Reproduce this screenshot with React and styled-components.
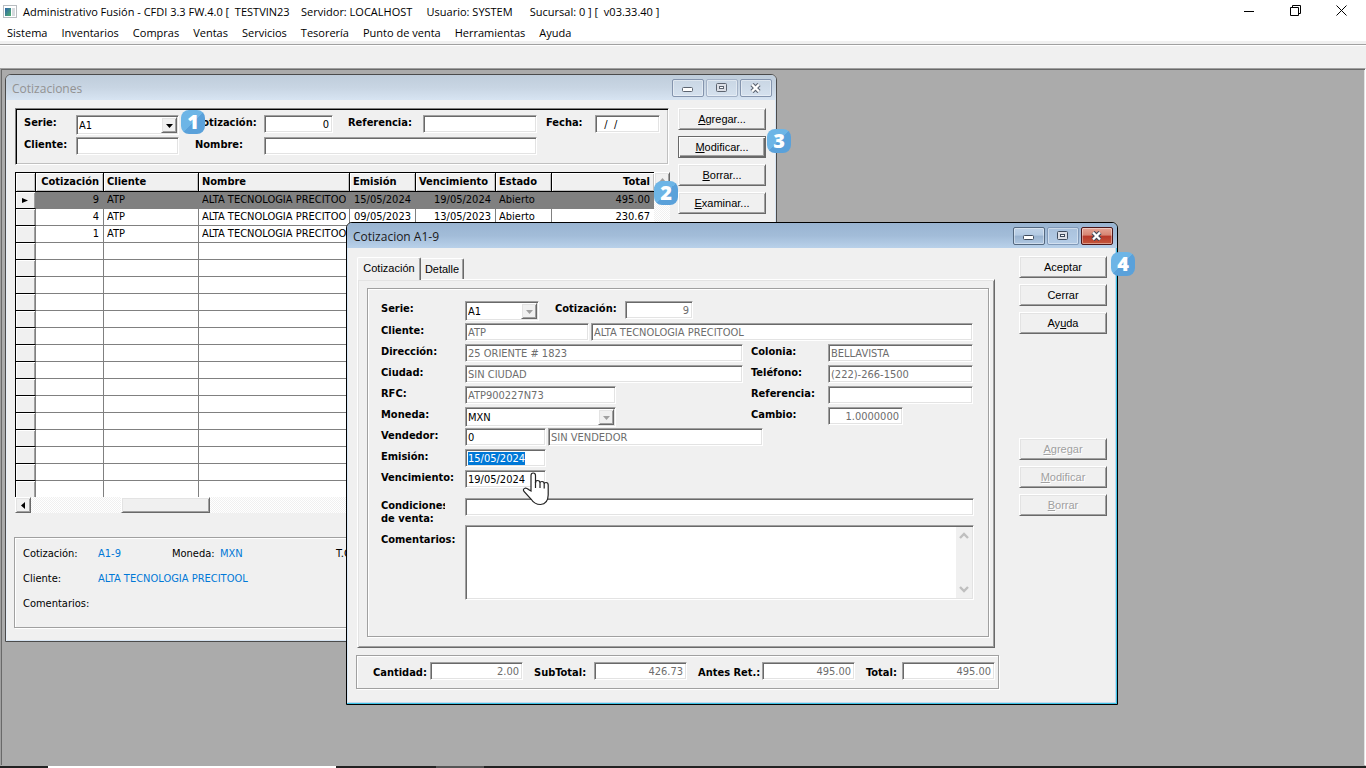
import React, { useEffect, useRef } from "react";
import styled, { createGlobalStyle, css } from "styled-components";

const uiFont = `"DejaVu Sans Condensed", "Noto Sans", sans-serif`;
const titleFont = `"Open Sans", "Noto Sans", sans-serif`;
const buttonFont = `"Liberation Sans", Arial, sans-serif`;

const raised = css`
  border: 1px solid;
  border-color: #fff #696969 #696969 #fff;
  box-shadow: inset 1px 1px 0 #e3e3e3, inset -1px -1px 0 #a0a0a0;
`;
const sunken = css`
  border: 1px solid;
  border-color: #a0a0a0 #fff #fff #a0a0a0;
  box-shadow: inset 1px 1px 0 #696969, inset -1px -1px 0 #e3e3e3;
`;
const etched = css`
  border: 1px solid #a0a0a0;
  box-shadow: inset 1px 1px 0 #fff, 1px 1px 0 #fff;
`;

const GlobalStyle = createGlobalStyle`
  * { box-sizing: border-box; }
  body {
    margin: 0;
    background: #ababab;
    font-family: ${uiFont};
    font-size: 11px;
    color: #000;
    overflow: hidden;
  }
  input, select, textarea, button { font: inherit; color: inherit; }
  ::selection { background: #0078d7; color: #fff; }
`;

const Page = styled.div`
  display: flex;
  flex-direction: column;
  height: 100vh;
`;
const AppTitle = styled.header`
  display: flex;
  align-items: center;
  height: 23px;
  padding: 0 2px;
  background: #fff;
  font-family: ${titleFont};
  h1 {
    flex: 1;
    margin: 0 0 0 5px;
    font-size: 11px;
    font-weight: 400;
    white-space: pre;
  }
`;
const SysButton = styled.button`
  display: flex;
  justify-content: center;
  align-items: center;
  width: 46px;
  height: 22px;
  padding: 0 0 2px;
  border: 0;
  background: none;
`;
const MenuBar = styled.nav`
  display: flex;
  gap: 14px;
  height: 18px;
  padding: 0 7px;
  background: #fff;
  font-family: ${titleFont};
  font-size: 11px;
  line-height: 20px;
  a {
    color: #000;
    text-decoration: none;
  }
`;
const Toolbar = styled.div`
  height: 27px;
  background: #f0f0f0;
  &::before {
    content: "";
    display: block;
    height: 4px;
    border-bottom: 1px solid #fff;
    box-shadow: inset 0 -1px 0 #a0a0a0;
  }
`;
const Desktop = styled.main`
  position: relative;
  flex: 1;
  background: #ababab;
  border: 1px solid;
  border-color: #a0a0a0 #fff #ababab #a0a0a0;
  box-shadow: inset 1px 1px 0 #696969, inset -1px 0 0 #e3e3e3;
`;
const Taskbar = styled.footer`
  display: flex;
  height: 2px;
  padding-left: 48px;
  background: #222;
`;
const TaskItem = styled.div`
  width: ${(p) => p.$w}px;
  margin-right: 100px;
  background: ${(p) => p.$bg};
`;

const Win = styled.section`
  position: absolute;
  left: ${(p) => p.$x}px;
  top: ${(p) => p.$y}px;
  width: 772px;
  display: flex;
  flex-direction: column;
  background: #f0f0f0;
  border: 1px solid ${(p) => (p.$active ? "#000" : "#4b4b4b")};
  border-radius: 6px 6px 0 0;
  box-shadow: ${(p) =>
    p.$active
      ? "inset -1px -1px 0 #3cc3e6, inset 1px 0 0 #d9e8f7, inset -2px -2px 0 #c5d8ec"
      : "inset 1px 0 0 #e8eff8, inset -1px -1px 0 #d7e4f2"};
`;
const WinTitle = styled.div`
  display: flex;
  gap: 2px;
  height: 25px;
  padding: 4px 4px 0 6px;
  border-radius: 5px 5px 0 0;
  font-family: ${titleFont};
  background: ${(p) =>
    p.$active
      ? "linear-gradient(#99b4d1, #a2bcd8 50%, #b9d1ea)"
      : "linear-gradient(#bfcddb, #c8d5e3 50%, #d7e4f2)"};
  color: ${(p) => (p.$active ? "#1a1a1a" : "#929292")};
  h2 {
    flex: 1;
    margin: 0;
    font-size: 12px;
    font-weight: 400;
    line-height: 20px;
  }
`;
const WinButton = styled.button`
  display: flex;
  justify-content: center;
  align-items: center;
  width: 32px;
  height: 18px;
  padding: 0 0 1px;
  border: 1px solid ${(p) => (p.$close ? "#4c1518" : p.$active ? "#54687f" : "#8494ad")};
  border-radius: 2px;
  box-shadow: inset 0 0 0 1px rgba(255, 255, 255, 0.4);
  background: ${(p) =>
    p.$close
      ? "linear-gradient(#e5a596, #d68472 45%, #b8382a 50%, #c4573c)"
      : p.$active
        ? "linear-gradient(#c0d3e8, #b3cae3 45%, #98b2cf 50%, #b0c8e2)"
        : "linear-gradient(#c9d6e4, #d5e1ee)"};
  ${(p) =>
    p.$dim &&
    css`
      border-color: ${p.$active ? "#8199b8" : "#a3b1c6"};
      background: ${p.$active ? "linear-gradient(#a9c1dc, #b4cce6)" : "linear-gradient(#c9d6e4, #d5e1ee)"};
    `}
`;
const Body = styled.div`
  display: flex;
  align-items: flex-start;
  gap: ${(p) => p.$gap}px;
  padding: 8px 10px ${(p) => p.$bottom}px 9px;
`;
const Main = styled.div`
  flex: 1;
  min-width: 0;
`;
const ButtonColumn = styled.div`
  display: flex;
  flex-direction: column;
  gap: 6px;
  width: 88px;
`;
const PushButton = styled.button`
  ${raised}
  height: 22px;
  padding: 0;
  background: #f0f0f0;
  font-family: ${buttonFont};
  font-size: 11px;
  line-height: 20px;
  ${(p) =>
    p.$focused &&
    css`
      border-color: #696969;
      box-shadow: inset 1px 1px 0 #fff, inset -1px -1px 0 #696969, inset -2px -2px 0 #a0a0a0;
    `}
  &:disabled {
    color: #a0a0a0;
    text-shadow: 1px 1px 0 #fff;
  }
`;
const Spacer = styled.div`
  height: ${(p) => p.$h}px;
`;

const Label = styled.label`
  padding-top: 1px;
  font-weight: 700;
  line-height: 13px;
  white-space: nowrap;
`;
const Field = styled.input`
  ${sunken}
  width: ${(p) => (p.$w ? `${p.$w}px` : "100%")};
  height: 18px;
  min-width: 0;
  padding: 0 ${(p) => (p.$right ? 3 : 2)}px;
  border-radius: 0;
  outline: 0;
  background: #fff;
  text-align: ${(p) => (p.$right ? "right" : "left")};
  &:read-only {
    color: #6d6d6d;
  }
`;
const Combo = styled.div`
  ${sunken}
  display: flex;
  width: ${(p) => p.$w}px;
  height: 20px;
  padding: 1px;
  background: #fff;
  select {
    flex: 1;
    min-width: 0;
    padding: 0 1px;
    border: 0;
    outline: 0;
    appearance: none;
    background: none;
    opacity: 1;
    color: #000;
  }
`;
const ComboArrow = styled.span`
  ${raised}
  display: flex;
  justify-content: center;
  align-items: center;
  width: 16px;
  background: #f0f0f0;
`;

const FilterPanel = styled.form`
  display: grid;
  grid-template-columns: 52px 119px 69px 84px 75px 123px 49px 65px;
  grid-auto-rows: 22px;
  align-items: start;
  height: 57px;
  padding: 6px 8px;
  border: 1px solid;
  border-color: #808080 #fff #fff #808080;
  box-shadow: inset 1px 1px 0 #000, inset -1px -1px 0 #c0c0c0;
`;
const Wide = styled.div`
  display: flex;
  gap: ${(p) => p.$gap || 0}px;
  grid-column: span ${(p) => p.$span};
  padding-right: ${(p) => p.$pad || 0}px;
`;

const GridView = styled.div`
  display: grid;
  grid-template-columns: 1fr 16px;
  margin-top: 7px;
`;
const Table = styled.table`
  width: 100%;
  table-layout: fixed;
  border-spacing: 0;
  border-left: 1px solid #000;
  background: #fff;
  th {
    height: 20px;
    padding: 0 3px 1px;
    border: solid #000;
    border-width: 1px 1px 1px 0;
    box-shadow: inset 1px 1px 0 #fff, inset -1px -1px 0 #c0c0c0;
    background: #f0f0f0;
    font-weight: 700;
    line-height: 13px;
    text-align: left;
    white-space: nowrap;
  }
  td {
    height: 17px;
    padding: 0 3px 2px;
    border: solid #808080;
    border-width: 0 1px 1px 0;
    line-height: 13px;
  }
  th:last-child,
  td:last-child {
    border-right: 0;
  }
  th.num,
  td.num {
    padding-right: 4px;
    text-align: right;
  }
  td.head {
    padding: 0;
    background: #f0f0f0;
    border-color: #808080 #808080 #000;
    box-shadow: inset 1px 1px 0 #fff, inset -1px 0 0 #a0a0a0;
    text-align: center;
  }
  tr:last-child td {
    height: 16px;
    border-bottom: 0;
  }
  tr.selected td {
    background: #808080;
    border-right-color: #808080;
  }
  tr.selected td.head {
    background: #f0f0f0;
  }
  svg {
    display: block;
    margin: 0 auto;
  }
`;
const Clip = styled.div`
  overflow: hidden;
  height: 13px;
  white-space: nowrap;
`;
const ScrollTrack = styled.div`
  display: flex;
  flex-direction: ${(p) => (p.$vertical ? "column" : "row")};
  justify-content: space-between;
  background: repeating-conic-gradient(#fff 0 25%, #f0f0f0 0 50%) 0 0 / 2px 2px;
`;
const ScrollButton = styled.button`
  ${raised}
  display: flex;
  justify-content: center;
  align-items: center;
  width: 16px;
  height: 16px;
  padding: 0;
  background: #f0f0f0;
`;
const ScrollThumb = styled.div`
  ${raised}
  width: 89px;
  height: 16px;
  margin: 0 auto 0 90px;
  background: #f0f0f0;
`;

const Summary = styled.div`
  ${etched}
  display: grid;
  grid-template-columns: 75px 74px 48px 116px 1fr;
  grid-auto-rows: 25px;
  height: 91px;
  margin: 24px 0 0 -1px;
  padding: 3px 8px;
  line-height: 25px;
  white-space: nowrap;
`;
const Value = styled.span`
  grid-column: span ${(p) => p.$span || 1};
  color: #0078d7;
`;

const Tabs = styled.div`
  display: flex;
  align-items: flex-end;
  height: 23px;
  margin: 1px 0 -1px 1px;
`;
const Tab = styled.button`
  position: relative;
  z-index: ${(p) => (p.$active ? 1 : 0)};
  height: ${(p) => (p.$active ? 23 : 21)}px;
  margin-bottom: ${(p) => (p.$active ? 0 : 1)}px;
  width: ${(p) => (p.$active ? 64 : 43)}px;
  padding: 0 0 ${(p) => (p.$active ? 2 : 0)}px;
  border: solid;
  border-color: #fff #696969 #f0f0f0 #fff;
  border-width: 1px 1px 0 ${(p) => (p.$active ? 1 : 0)}px;
  border-radius: 2px 2px 0 0;
  box-shadow: inset -1px 0 0 #a0a0a0;
  background: #f0f0f0;
  font-family: ${buttonFont};
  line-height: 20px;
`;
const TabPage = styled.div`
  ${raised}
  height: 369px;
  margin: 0 4px 0 1px;
  padding: 8px 5px 9px 9px;
`;
const Group = styled.form`
  ${etched}
  height: 349px;
  padding: 12px 14px 0 13px;
`;
const FormGrid = styled.div`
  display: grid;
  grid-template-columns: 84px 286px 77px 145px;
  grid-template-rows: 22px;
  grid-auto-rows: 21px;
  align-items: start;
`;
const SerieRow = styled.div`
  display: flex;
  align-items: flex-start;
  grid-column: span 3;
  label {
    width: 70px;
    margin-left: 16px;
  }
`;
const NotesGrid = styled.div`
  display: grid;
  grid-template-columns: 84px 1fr;
  grid-template-rows: 27px 75px;
  align-items: start;
  margin-top: 7px;
`;
const TwoLineLabel = styled(Label)`
  width: 64px;
  overflow: hidden;
`;
const NotesLabel = styled(Label)`
  padding-top: 8px;
`;
const Notes = styled.div`
  ${sunken}
  display: flex;
  height: 75px;
  padding: 1px;
  background: #fff;
  textarea {
    flex: 1;
    border: 0;
    outline: 0;
    resize: none;
    background: none;
  }
`;
const NotesScroll = styled.div`
  display: flex;
  flex-direction: column;
  justify-content: space-between;
  align-items: center;
  width: 16px;
  padding: 5px 0;
  background: #f0f0f0;
`;
const Totals = styled.div`
  ${etched}
  display: grid;
  grid-template-columns: 161px 164px 168px 1fr;
  height: 34px;
  padding: 6px 3px 0 16px;
`;
const Total = styled.div`
  display: flex;
  justify-content: space-between;
  padding-right: 11px;
  label {
    padding-top: 4px;
  }
  &:last-child {
    padding-right: 0;
  }
`;

const Badge = styled.div`
  position: absolute;
  left: ${(p) => p.$x}px;
  top: ${(p) => p.$y}px;
  width: 24px;
  height: 24px;
  border-radius: 8px;
  background: linear-gradient(135deg, #6db5e6 50%, #5aa1da 50%);
  color: #fff;
  font: 800 20px/23px "Open Sans", sans-serif;
  text-align: center;
`;
const Pointer = styled.svg`
  position: absolute;
  left: 521px;
  top: 403px;
`;

const Arrow = ({ dir = "down", color = "#000" }) => {
  const points = {
    down: "0,2 7,2 3.5,6",
    up: "0,5 7,5 3.5,1",
    left: "5,0 5,7 1,3.5",
    right: "0,1 6,3.5 0,6",
  };
  return (
    <svg width="7" height="7" aria-hidden="true">
      <polygon points={points[dir]} fill={color} />
    </svg>
  );
};

const Chevron = ({ up }) => (
  <svg width="10" height="8" aria-hidden="true">
    <path d={up ? "M1 6 L5 2 L9 6" : "M1 2 L5 6 L9 2"} fill="none" stroke="#bfbfbf" strokeWidth="2.4" />
  </svg>
);

const Mnemonic = ({ text, at = 0 }) => (
  <>
    {text.slice(0, at)}
    <u>{text[at]}</u>
    {text.slice(at + 1)}
  </>
);

const Select = ({ id, w, value, disabled }) => (
  <Combo $w={w}>
    <select id={id} defaultValue={value} disabled={disabled}>
      <option>{value}</option>
    </select>
    <ComboArrow>
      <Arrow color={disabled ? "#a0a0a0" : "#000"} />
    </ComboArrow>
  </Combo>
);

const WindowBar = ({ title, active }) => {
  const stroke = active ? "#3f4b5c" : "#5c6470";
  return (
    <WinTitle $active={active}>
      <h2>{title}</h2>
      <WinButton $active={active} aria-label="Minimizar">
        <svg width="12" height="10">
          <rect x="0.5" y="4.5" width="10" height="4" rx="1" fill="#fff" stroke={stroke} />
        </svg>
      </WinButton>
      <WinButton $active={active} $dim aria-label="Maximizar">
        <svg width="12" height="10">
          <rect x="0.5" y="0.5" width="10" height="8" rx="1" fill="#dcdfe6" stroke={stroke} />
          <rect x="3.5" y="3.5" width="4" height="2" fill="#fff" stroke={stroke} />
        </svg>
      </WinButton>
      <WinButton $active={active} $close={active} aria-label="Cerrar">
        <svg width="12" height="10">
          <path d="M2 1.5 L9 8.5 M9 1.5 L2 8.5" stroke={stroke} strokeWidth="4.5" />
          <path d="M2 1.5 L9 8.5 M9 1.5 L2 8.5" stroke="#fff" strokeWidth="2.4" />
        </svg>
      </WinButton>
    </WinTitle>
  );
};

const menus = [
  "Sistema",
  "Inventarios",
  "Compras",
  "Ventas",
  "Servicios",
  "Tesorería",
  "Punto de venta",
  "Herramientas",
  "Ayuda",
];

const columns = [
  { title: "Cotización", w: 68, num: true },
  { title: "Cliente", w: 95 },
  { title: "Nombre", w: 151 },
  { title: "Emisión", w: 66, num: true, left: true },
  { title: "Vencimiento", w: 80, num: true, left: true },
  { title: "Estado", w: 56 },
  { title: "Total", w: 102, num: true },
];

const rows = [
  ["9", "ATP", "ALTA TECNOLOGIA PRECITOOL", "15/05/2024", "19/05/2024", "Abierto", "495.00"],
  ["4", "ATP", "ALTA TECNOLOGIA PRECITOOL", "09/05/2023", "13/05/2023", "Abierto", "230.67"],
  ["1", "ATP", "ALTA TECNOLOGIA PRECITOOL", "", "", "", ""],
  ...Array(15).fill(["", "", "", "", "", "", ""]),
];

const ListWindow = () => (
  <Win $x={4} $y={5}>
    <WindowBar title="Cotizaciones" />
    <Body $gap={9} $bottom={13}>
      <Main>
        <FilterPanel>
          <Label htmlFor="f-serie">Serie:</Label>
          <Select id="f-serie" w={103} value="A1" />
          <Label htmlFor="f-cot">Cotización:</Label>
          <Field id="f-cot" $w={69} $right defaultValue="0" />
          <Label htmlFor="f-ref">Referencia:</Label>
          <Field id="f-ref" $w={114} />
          <Label htmlFor="f-fecha">Fecha:</Label>
          <Field id="f-fecha" defaultValue="  /  /" />
          <Label htmlFor="f-cliente">Cliente:</Label>
          <Field id="f-cliente" $w={103} />
          <Label htmlFor="f-nombre">Nombre:</Label>
          <Wide $span={3} $pad={9}>
            <Field id="f-nombre" />
          </Wide>
        </FilterPanel>
        <GridView>
          <Table>
            <colgroup>
              <col style={{ width: 20 }} />
              {columns.map((c) => (
                <col key={c.title} style={{ width: c.w }} />
              ))}
            </colgroup>
            <thead>
              <tr>
                <th aria-label="Fila" />
                {columns.map((c) => (
                  <th key={c.title} className={c.num && !c.left ? "num" : undefined}>
                    {c.title}
                  </th>
                ))}
              </tr>
            </thead>
            <tbody>
              {rows.map((row, i) => (
                <tr key={i} className={i === 0 ? "selected" : undefined}>
                  <td className="head">{i === 0 && <Arrow dir="right" />}</td>
                  {row.map((cell, j) => (
                    <td key={j} className={columns[j].num ? "num" : undefined}>
                      <Clip>{cell}</Clip>
                    </td>
                  ))}
                </tr>
              ))}
            </tbody>
          </Table>
          <ScrollTrack $vertical>
            <ScrollButton aria-label="Subir">
              <Arrow dir="up" color="#a0a0a0" />
            </ScrollButton>
            <ScrollButton aria-label="Bajar">
              <Arrow color="#a0a0a0" />
            </ScrollButton>
          </ScrollTrack>
          <ScrollTrack>
            <ScrollButton aria-label="Izquierda">
              <Arrow dir="left" />
            </ScrollButton>
            <ScrollThumb />
          </ScrollTrack>
        </GridView>
        <Summary>
          <span>Cotización:</span>
          <Value>A1-9</Value>
          <span>Moneda:</span>
          <Value>MXN</Value>
          <span>T.C.:</span>
          <span>Cliente:</span>
          <Value $span={4}>ALTA TECNOLOGIA PRECITOOL</Value>
          <span>Comentarios:</span>
        </Summary>
      </Main>
      <ButtonColumn>
        <PushButton><Mnemonic text="Agregar..." /></PushButton>
        <PushButton $focused><Mnemonic text="Modificar..." /></PushButton>
        <PushButton><Mnemonic text="Borrar..." /></PushButton>
        <PushButton><Mnemonic text="Examinar..." /></PushButton>
      </ButtonColumn>
    </Body>
  </Win>
);

const QuoteWindow = () => {
  const emision = useRef(null);

  useEffect(() => {
    emision.current.focus();
    emision.current.select();
  }, []);

  return (
    <Win $x={345} $y={153} $active>
      <WindowBar title="Cotizacion A1-9" active />
      <Body $gap={20} $bottom={15}>
        <Main>
          <Tabs>
            <Tab $active>Cotización</Tab>
            <Tab>Detalle</Tab>
          </Tabs>
          <TabPage>
            <Group>
              <FormGrid>
                <Label htmlFor="serie">Serie:</Label>
                <SerieRow>
                  <Select id="serie" w={74} value="A1" disabled />
                  <Label htmlFor="cotizacion">Cotización:</Label>
                  <Field id="cotizacion" $w={68} $right readOnly value="9" />
                </SerieRow>
                <Label htmlFor="cliente">Cliente:</Label>
                <Wide $span={3} $gap={2}>
                  <Field id="cliente" $w={124} readOnly value="ATP" />
                  <Field aria-label="Nombre" $w={382} readOnly value="ALTA TECNOLOGIA PRECITOOL" />
                </Wide>
                <Label htmlFor="direccion">Dirección:</Label>
                <Field id="direccion" $w={278} readOnly value="25 ORIENTE # 1823" />
                <Label htmlFor="colonia">Colonia:</Label>
                <Field id="colonia" readOnly value="BELLAVISTA" />
                <Label htmlFor="ciudad">Ciudad:</Label>
                <Field id="ciudad" $w={278} readOnly value="SIN CIUDAD" />
                <Label htmlFor="telefono">Teléfono:</Label>
                <Field id="telefono" readOnly value="(222)-266-1500" />
                <Label htmlFor="rfc">RFC:</Label>
                <Field id="rfc" $w={151} readOnly value="ATP900227N73" />
                <Label htmlFor="referencia">Referencia:</Label>
                <Field id="referencia" />
                <Label htmlFor="moneda">Moneda:</Label>
                <Select id="moneda" w={151} value="MXN" disabled />
                <Label htmlFor="cambio">Cambio:</Label>
                <Field id="cambio" $w={75} $right readOnly value="1.0000000" />
                <Label htmlFor="vendedor">Vendedor:</Label>
                <Wide $span={3} $gap={2}>
                  <Field id="vendedor" $w={81} defaultValue="0" />
                  <Field aria-label="Nombre del vendedor" $w={215} readOnly value="SIN VENDEDOR" />
                </Wide>
                <Label htmlFor="emision">Emisión:</Label>
                <Wide $span={3}>
                  <Field id="emision" ref={emision} $w={81} defaultValue="15/05/2024" />
                </Wide>
                <Label htmlFor="vencimiento">Vencimiento:</Label>
                <Wide $span={3}>
                  <Field id="vencimiento" $w={81} defaultValue="19/05/2024" />
                </Wide>
              </FormGrid>
              <NotesGrid>
                <TwoLineLabel htmlFor="condiciones">
                  Condiciones
                  <br />
                  de venta:
                </TwoLineLabel>
                <Field id="condiciones" />
                <NotesLabel htmlFor="comentarios">Comentarios:</NotesLabel>
                <Notes>
                  <textarea id="comentarios" />
                  <NotesScroll>
                    <Chevron up />
                    <Chevron />
                  </NotesScroll>
                </Notes>
              </NotesGrid>
            </Group>
          </TabPage>
          <Spacer $h={7} />
          <Totals>
            <Total>
              <Label htmlFor="t-cantidad">Cantidad:</Label>
              <Field id="t-cantidad" $w={93} $right readOnly value="2.00" />
            </Total>
            <Total>
              <Label htmlFor="t-sub">SubTotal:</Label>
              <Field id="t-sub" $w={93} $right readOnly value="426.73" />
            </Total>
            <Total>
              <Label htmlFor="t-antes">Antes Ret.:</Label>
              <Field id="t-antes" $w={93} $right readOnly value="495.00" />
            </Total>
            <Total>
              <Label htmlFor="t-total">Total:</Label>
              <Field id="t-total" $w={93} $right readOnly value="495.00" />
            </Total>
          </Totals>
        </Main>
        <ButtonColumn>
          <PushButton>Aceptar</PushButton>
          <PushButton>Cerrar</PushButton>
          <PushButton><Mnemonic text="Ayuda" at={2} /></PushButton>
          <Spacer $h={92} />
          <PushButton disabled><Mnemonic text="Agregar" /></PushButton>
          <PushButton disabled><Mnemonic text="Modificar" /></PushButton>
          <PushButton disabled><Mnemonic text="Borrar" /></PushButton>
        </ButtonColumn>
      </Body>
    </Win>
  );
};

const App = () => (
  <Page>
    <GlobalStyle />
    <AppTitle>
      <svg width="16" height="14" aria-hidden="true">
        <defs>
          <linearGradient id="icon" x1="0" y1="0" x2="1" y2="1">
            <stop offset="0" stopColor="#2d62a8" />
            <stop offset="1" stopColor="#4fb06d" />
          </linearGradient>
        </defs>
        <rect x="1.5" y="0.5" width="13" height="12" fill="#fff" stroke="#b8bcc0" />
        <rect x="3" y="3" width="6" height="8" fill="url(#icon)" />
        <rect x="10" y="3" width="3" height="8" fill="#d6dade" />
      </svg>
      <h1>{"Administrativo Fusión - CFDI 3.3 FW.4.0 [  TESTVIN23    Servidor: LOCALHOST     Usuario: SYSTEM      Sucursal: 0 ] [  v03.33.40 ]"}</h1>
      <SysButton aria-label="Minimizar">
        <svg width="10" height="10"><path d="M0 5.5 H10" stroke="#000" /></svg>
      </SysButton>
      <SysButton aria-label="Restaurar">
        <svg width="11" height="11" fill="none" stroke="#000">
          <path d="M0.5 2.5 H8.5 V10.5 H0.5 Z M2.5 2.5 V0.5 H10.5 V8.5 H8.5" />
        </svg>
      </SysButton>
      <SysButton aria-label="Cerrar">
        <svg width="11" height="11"><path d="M0.5 0.5 L10.5 10.5 M10.5 0.5 L0.5 10.5" stroke="#000" /></svg>
      </SysButton>
    </AppTitle>
    <MenuBar>
      {menus.map((m) => (
        <a key={m} href="#menu">{m}</a>
      ))}
    </MenuBar>
    <Toolbar />
    <Desktop>
      <ListWindow />
      <QuoteWindow />
      <Badge $x={180} $y={41}>1</Badge>
      <Badge $x={653} $y={112}>2</Badge>
      <Badge $x={766} $y={60}>3</Badge>
      <Badge $x={1110} $y={183}>4</Badge>
      <Pointer width="28" height="34" viewBox="0 0 28 34" aria-hidden="true">
        <path
          d="M9 19 L9 3.5 Q9 1 11.2 1 Q13.5 1 13.5 3.5 L13.5 11 Q13.5 8.5 15.5 8.5 Q18 8.5 18 11 Q18 9.5 20 9.5 Q22.2 9.5 22.2 12 Q22.5 10.5 24 10.5 Q26.2 10.5 26.2 13 L26.2 23 Q26 32 18.5 32.5 Q12.5 32.5 9 27 L2 19.5 Q0.5 17 3 16.2 Q5 16 6.5 17.5 Z"
          fill="#fff"
          stroke="#222"
          strokeWidth="1.2"
        />
        <path d="M13.5 10 V16 M18 11 V16 M22.2 12 V16.5" stroke="#222" strokeWidth="1.2" />
      </Pointer>
    </Desktop>
    <Taskbar>
      <TaskItem $w={288} $bg="#fff" />
      <TaskItem $w={48} $bg="#555" />
    </Taskbar>
  </Page>
);

export default App;
